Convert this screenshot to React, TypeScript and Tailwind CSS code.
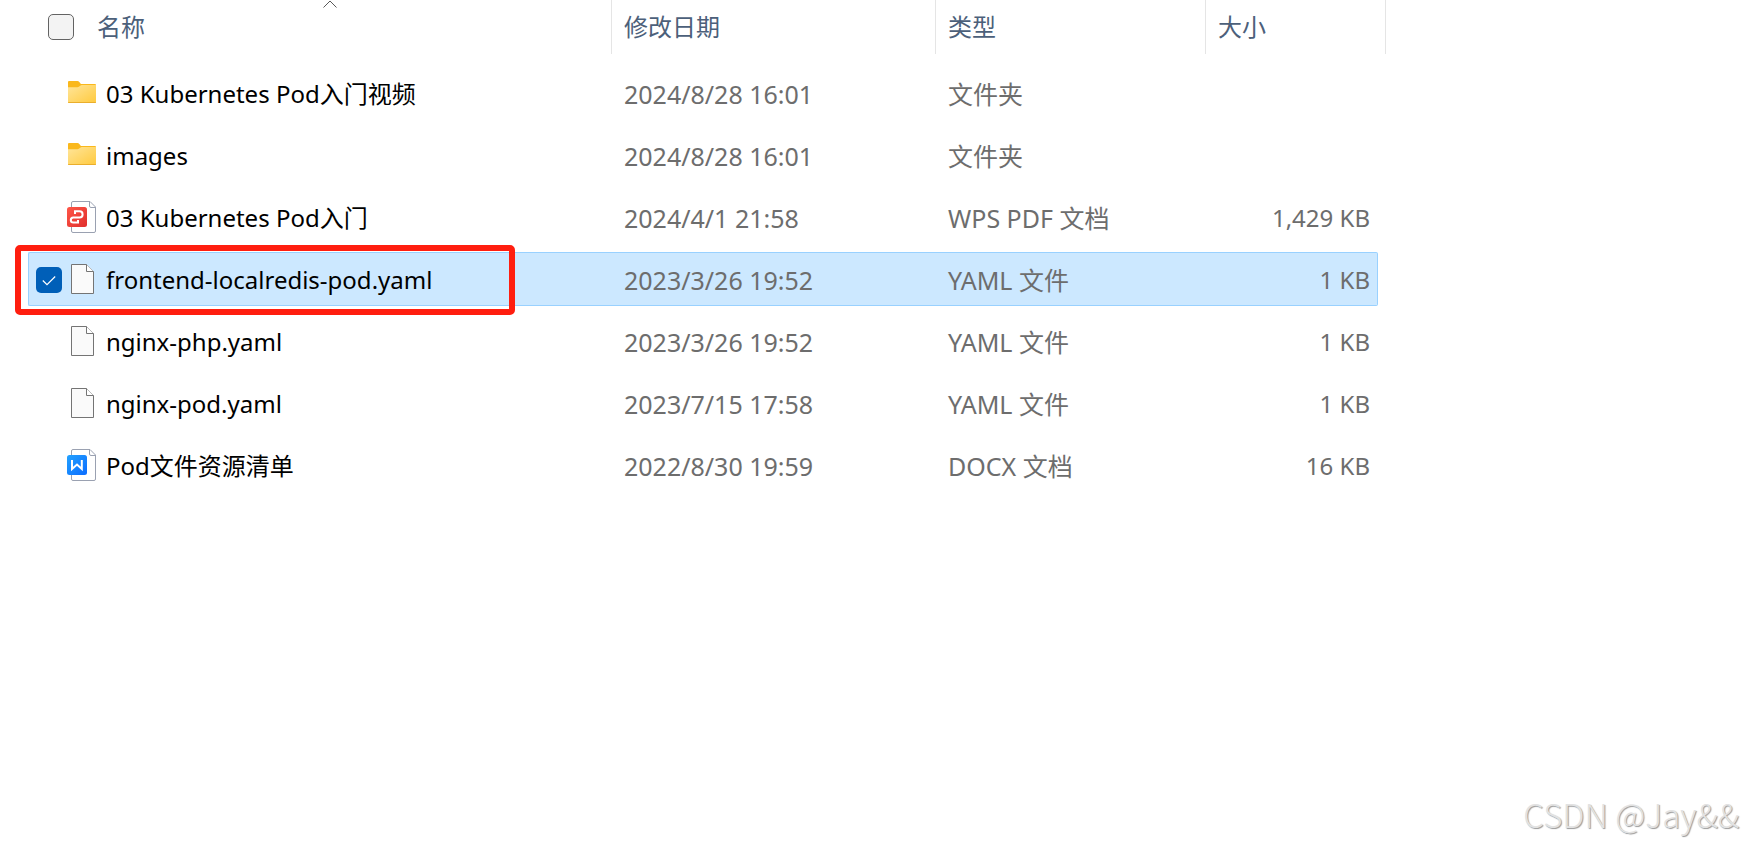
import { useState } from 'react';
import { clsx } from 'clsx';

type FileKind = 'folder' | 'pdf' | 'blank' | 'word';

interface FileEntry {
  name: string;
  kind: FileKind;
  modified: string;
  type: string;
  size?: string;
}

const files: FileEntry[] = [
  { name: '03 Kubernetes Pod入门视频', kind: 'folder', modified: '2024/8/28 16:01', type: '文件夹' },
  { name: 'images', kind: 'folder', modified: '2024/8/28 16:01', type: '文件夹' },
  { name: '03 Kubernetes Pod入门', kind: 'pdf', modified: '2024/4/1 21:58', type: 'WPS PDF 文档', size: '1,429 KB' },
  { name: 'frontend-localredis-pod.yaml', kind: 'blank', modified: '2023/3/26 19:52', type: 'YAML 文件', size: '1 KB' },
  { name: 'nginx-php.yaml', kind: 'blank', modified: '2023/3/26 19:52', type: 'YAML 文件', size: '1 KB' },
  { name: 'nginx-pod.yaml', kind: 'blank', modified: '2023/7/15 17:58', type: 'YAML 文件', size: '1 KB' },
  { name: 'Pod文件资源清单', kind: 'word', modified: '2022/8/30 19:59', type: 'DOCX 文档', size: '16 KB' },
];

const HIGHLIGHTED = 'frontend-localredis-pod.yaml';

const FolderIcon = () => (
  <svg viewBox="0 1 32 32" className="size-8 shrink-0 overflow-visible" aria-hidden="true">
    <defs>
      <linearGradient id="folder-front" x1="0" y1="0" x2="1" y2="1">
        <stop offset="0" stopColor="#ffe59a" />
        <stop offset="1" stopColor="#ffca3e" />
      </linearGradient>
    </defs>
    <path d="M2 5a1 1 0 0 1 1-1h8.5c.8 0 1.2.3 1.8 1l1.6 2H29a1 1 0 0 1 1 1v4H2z" fill="#fab81c" />
    <path d="M2 10.2h9.3c.8 0 1.3-.2 1.9-.7l1.3-1c.4-.3.7-.5 1.3-.5H30v17a1 1 0 0 1-1 1H3a1 1 0 0 1-1-1z" fill="url(#folder-front)" />
    <path d="M2 25c0 .6.4 1 1 1h26c.6 0 1-.4 1-1z" fill="#eaae2c" />
  </svg>
);

const BlankIcon = () => (
  <svg viewBox="0 1 32 32" className="size-8 shrink-0 overflow-visible" aria-hidden="true">
    <path d="M5.5 1.5H20.5L27.5 8.5V30.5H5.5z" fill="#fafafa" stroke="#747474" />
    <path d="M20.5 1.5V8.5H27.5" fill="#fff" stroke="#747474" />
  </svg>
);

// Outlined page that sits behind the WPS badges
const WpsPage = () => (
  <>
    <path d="M7 .5H24L29.5 6V30a1.5 1.5 0 0 1-1.5 1.5H7A1.5 1.5 0 0 1 5.5 30V2A1.5 1.5 0 0 1 7 .5z" fill="#fff" stroke="#9aa1b1" />
    <path d="M23.5 .5V5a1.5 1.5 0 0 0 1.5 1.5H29.5" fill="none" stroke="#9aa1b1" />
  </>
);

const PdfIcon = () => (
  <svg viewBox="0 1 32 32" className="size-8 shrink-0 overflow-visible" aria-hidden="true">
    <defs>
      <linearGradient id="pdf-badge" x1="0" y1="0" x2="1" y2="1">
        <stop offset="0" stopColor="#ff5647" />
        <stop offset="1" stopColor="#e02f2d" />
      </linearGradient>
    </defs>
    <WpsPage />
    <rect x="1" y="6" width="20" height="20" rx="2.5" fill="url(#pdf-badge)" />
    <path d="M9 13V10.3H13.5A3.1 3.1 0 0 1 13.5 16.5H7.3A2.5 2.5 0 0 0 7.3 21.5H12V19" fill="none" stroke="#fff" strokeWidth="2" />
  </svg>
);

const WordIcon = () => (
  <svg viewBox="0 1 32 32" className="size-8 shrink-0 overflow-visible" aria-hidden="true">
    <defs>
      <linearGradient id="word-badge" x1="0" y1="0" x2="1" y2="1">
        <stop offset="0" stopColor="#23a2ff" />
        <stop offset="1" stopColor="#0b6cff" />
      </linearGradient>
    </defs>
    <WpsPage />
    <rect x="1" y="6" width="20" height="20" rx="2.5" fill="url(#word-badge)" />
    <path d="M6 11V20L11 15.5L15.8 20V11" fill="none" stroke="#fff" strokeWidth="2" />
  </svg>
);

const icons: Record<FileKind, () => React.JSX.Element> = {
  folder: FolderIcon,
  pdf: PdfIcon,
  blank: BlankIcon,
  word: WordIcon,
};

interface FileRowProps {
  file: FileEntry;
  selected: boolean;
  onToggle: () => void;
}

const FileRow = ({ file, selected, onToggle }: FileRowProps) => {
  const Icon = icons[file.kind];
  const cell = clsx('h-[54px] border-y pt-[2px] pb-0', selected ? 'border-[#99d1ff] bg-[#cce8ff]' : 'border-transparent');

  return (
    <tr className="text-[#6d6d6d]">
      <td className={clsx(cell, 'relative rounded-l-xs border-l')}>
        <label className="flex items-center pl-[7px] text-black">
          <span className="relative mr-1 size-[26px] shrink-0">
            <input
              type="checkbox"
              checked={selected}
              onChange={onToggle}
              aria-label={file.name}
              className="block size-full appearance-none rounded-[5px] opacity-0 checked:bg-[#005fb8] checked:opacity-100"
            />
            {selected && (
              <svg viewBox="0 0 26 26" className="pointer-events-none absolute inset-0" aria-hidden="true">
                <path d="M6.8 13.5L11 17.7L19.2 9.5" fill="none" stroke="#fff" strokeWidth="1.2" />
              </svg>
            )}
          </span>
          <Icon />
          <span className="ml-2 truncate">{file.name}</span>
        </label>
        {file.name === HIGHLIGHTED && (
          <div className="pointer-events-none absolute -top-2 -bottom-[10px] -left-[14px] right-[97px] rounded-[5px] border-6 border-[#ff1e0f]" />
        )}
      </td>
      <td className={clsx(cell, 'pl-3 text-[25px]')}>{file.modified}</td>
      <td className={clsx(cell, 'pl-3 text-[25px]')}>{file.type}</td>
      <td className={clsx(cell, 'rounded-r-xs border-r pr-[7px] text-right')}>{file.size}</td>
      <td className="p-0" />
    </tr>
  );
};

const headCell = 'flex h-[54px] items-center border-r border-[#e5e5e5]';

export default function App() {
  const [selected, setSelected] = useState<string[]>([HIGHLIGHTED]);

  const toggle = (name: string) =>
    setSelected((prev) => (prev.includes(name) ? prev.filter((n) => n !== name) : [...prev, name]));

  return (
    <main className="flex min-h-screen flex-col justify-between bg-white font-['Noto_Sans','Noto_Sans_CJK_SC',sans-serif] text-[24px] leading-8">
      <div className="-mt-2 pr-[357px] pl-7">
        <table className="w-full table-fixed border-separate border-spacing-x-0 border-spacing-y-2">
          <colgroup>
            <col />
            <col className="w-[324px]" />
            <col className="w-[270px]" />
            <col className="w-[172px]" />
            <col className="w-2" />
          </colgroup>
          <thead className="text-left text-[#4c607a]">
            <tr className="h-[58px]">
              <th className="p-0 align-top font-normal">
                <div className={clsx(headCell, 'relative ml-5')}>
                  <input
                    type="checkbox"
                    aria-label="全选"
                    className="mr-[23px] size-[26px] appearance-none rounded-[5px] border border-[#636363] bg-[#f3f3f3]"
                  />
                  <button type="button">名称</button>
                  <svg viewBox="0 0 14 8" className="absolute top-0 left-1/2 h-2 w-[14px] -translate-x-1/2" aria-hidden="true">
                    <path d="M.5 7.5L7 1L13.5 7.5" fill="none" stroke="#5a5a5a" />
                  </svg>
                </div>
              </th>
              <th className="p-0 align-top font-normal">
                <div className={clsx(headCell, 'pl-3')}>
                  <button type="button">修改日期</button>
                </div>
              </th>
              <th className="p-0 align-top font-normal">
                <div className={clsx(headCell, 'pl-3')}>
                  <button type="button">类型</button>
                </div>
              </th>
              <th colSpan={2} className="p-0 align-top font-normal">
                <div className={clsx(headCell, 'pl-3')}>
                  <button type="button">大小</button>
                </div>
              </th>
            </tr>
          </thead>
          <tbody>
            {files.map((file) => (
              <FileRow
                key={file.name}
                file={file}
                selected={selected.includes(file.name)}
                onToggle={() => toggle(file.name)}
              />
            ))}
          </tbody>
        </table>
      </div>

      <footer className="pr-1 pb-[13px] text-right font-['Noto_Sans_CJK_SC',sans-serif] text-[33px] leading-10 font-light text-[#e2e2e2] [text-shadow:1px_1px_1px_#999999]">
        CSDN @Jay&amp;&amp;
      </footer>
    </main>
  );
}
